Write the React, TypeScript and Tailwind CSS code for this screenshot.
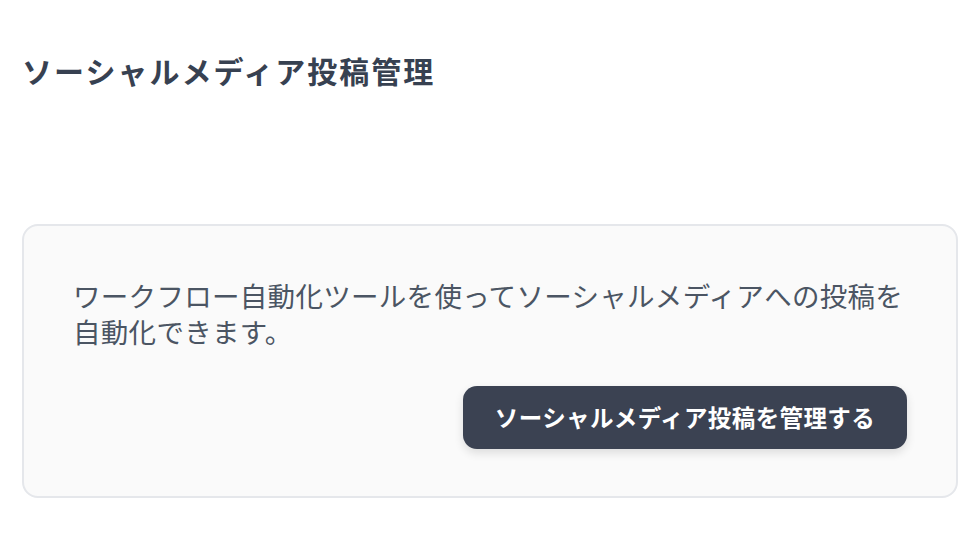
export default function App() {
  return (
    <div
      className="w-[980px] h-[536px] bg-white px-[22px] pt-[50px]"
      style={{ fontFamily: '"Noto Sans CJK JP", "Noto Sans", sans-serif' }}
    >
      <h1 className="text-[30px] leading-[40px] font-bold text-[#374151] tracking-[2px]">
        ソーシャルメディア投稿管理
      </h1>

      <section className="mt-[134px] w-[936px] rounded-2xl border-2 border-[#e5e7eb] bg-[#fafafa] px-[49px] pt-[51px] pb-[47px]">
        <p className="text-[27.5px] leading-[36px] tracking-[0.3px] text-[#4b5563]">
          ワークフロー自動化ツールを使ってソーシャルメディアへの投稿を自動化できます。
        </p>
        <div className="mt-[37px] flex justify-end">
          <button
            type="button"
            className="h-[63px] w-[444px] rounded-[14px] bg-[#3b4252] text-[23.5px] font-semibold tracking-[0.4px] text-white shadow-[0_4px_10px_rgba(0,0,0,0.12)]"
          >
            ソーシャルメディア投稿を管理する
          </button>
        </div>
      </section>
    </div>
  );
}
